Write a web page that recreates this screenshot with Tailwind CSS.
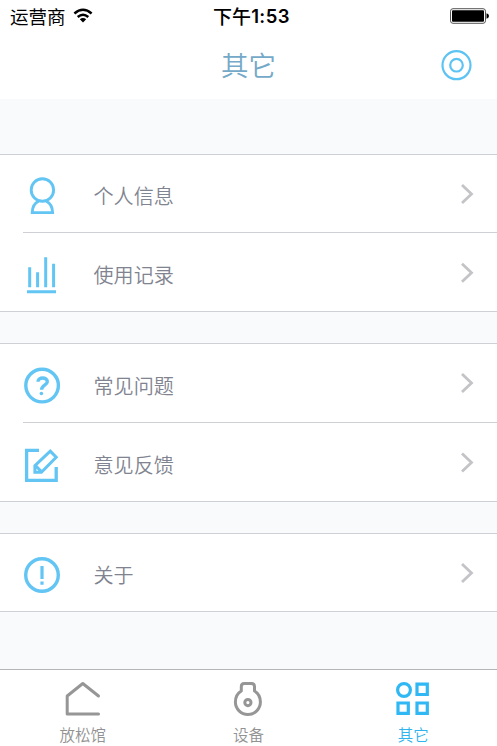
<!DOCTYPE html>
<html lang="zh-CN">
<head>
<meta charset="utf-8">
<meta name="viewport" content="width=device-width, initial-scale=1">
<title>其它</title>
<script src="https://cdn.jsdelivr.net/npm/@tailwindcss/browser@4"></script>
</head>
<body class="bg-[#f9fafc] font-['Noto_Sans_CJK_SC',sans-serif]">
<div class="flex h-[746px] w-[497px] flex-col overflow-hidden">
  <header class="h-[99px] shrink-0 bg-white">
    <div class="grid h-8 grid-cols-3 items-center text-black">
      <div class="flex items-center gap-[7px] pl-[10px]">
        <span class="text-[18.5px] leading-8">运营商</span>
        <svg class="h-[16px] w-[20px]" viewBox="0 0 20 16" fill="none" stroke="#000" stroke-width="2.5"><path d="M1.4 5.5Q10 -1.9 18.6 5.5M4.7 9Q10 4.6 15.3 9"/><path d="M6.8 11.3Q10 8.8 13.2 11.3L10 14.6Z" fill="#000" stroke="none"/></svg>
      </div>
      <div class="flex items-center justify-center whitespace-nowrap pl-[6px] leading-8">
        <span class="text-[19px] font-medium">下午</span><span class="font-['Inter',sans-serif] text-[18.5px] font-semibold tracking-[0.4px]">1:53</span>
      </div>
      <div class="flex justify-end pr-[8px]">
        <svg class="h-4 w-[39px]" viewBox="0 0 39 16"><rect x=".5" y=".7" width="35" height="14.6" rx="2.5" fill="#fff" stroke="#555"/><rect x="2" y="2.2" width="32" height="11.6" rx="1" fill="#000"/><path d="M36.5 5.3Q39 5.7 39 8T36.5 10.7Z" fill="#000"/></svg>
      </div>
    </div>
    <div class="grid h-[66px] grid-cols-3 items-center">
      <span></span>
      <h1 class="pb-[3px] text-center text-[27.5px] font-[350] leading-[60px] text-[#74a9c8]">其它</h1>
      <svg class="mr-[25px] h-8 w-8 justify-self-end" viewBox="0 0 32 32" fill="none" stroke="#5dc3f3" stroke-width="2.2"><circle cx="16.5" cy="16.2" r="14"/><circle cx="16.5" cy="16.2" r="6.3"/></svg>
    </div>
  </header>

  <main class="flex grow flex-col pt-[55px] text-[20.1px] font-[350] text-[#7f8490]">
    <section class="border-y border-[#cfd0d6] bg-white">
      <div class="flex h-[77px] items-center pr-[23px]">
        <svg class="h-[77px] w-[70px]" viewBox="0 1 70 77" fill="none" stroke="#62c5f3" stroke-width="2.9"><circle cx="42.4" cy="36" r="11.2"/><path d="M38.6 47.2Q32.4 50 32.2 58.6H52.6Q52.4 50 46.2 47.2"/></svg>
        <span class="grow pl-[23.5px] pt-1 leading-8">个人信息</span>
        <svg class="h-[22px] w-[14px]" viewBox="0 0 14 22" fill="none" stroke="#c4c4c8" stroke-width="2.8"><path d="M2 2L11.5 11L2 20"/></svg>
      </div>
      <div class="ml-[23px] h-px bg-[#cfd0d6]"></div>
      <div class="flex h-[78px] items-center pr-[23px]">
        <svg class="h-[78px] w-[70px]" viewBox="0 1 70 78" fill="none" stroke="#62c5f3" stroke-width="3"><path d="M29.7 35.3V55.3M37.6 40.3V55.3M45.7 25.3V55.3M53.6 31.8V55.3M27 59.7H56"/></svg>
        <span class="grow pl-[23.5px] pt-[6px] leading-8">使用记录</span>
        <svg class="h-[22px] w-[14px]" viewBox="0 -.7 14 22" fill="none" stroke="#c4c4c8" stroke-width="2.8"><path d="M2 2L11.5 11L2 20"/></svg>
      </div>
    </section>

    <section class="mt-[31px] border-y border-[#cfd0d6] bg-white">
      <div class="flex h-[78px] items-center pr-[23px]">
        <svg class="h-[78px] w-[70px]" viewBox="0 1 70 78" fill="none" stroke="#62c5f3" stroke-width="3.4"><circle cx="42.1" cy="42.6" r="16.3"/><path d="M38 38.8C38.1 33.7 47.3 33.6 47.3 38.8C47.3 42 41.6 41.8 41.6 46.8"/><circle cx="41.4" cy="50.5" r="1.8" fill="#62c5f3" stroke="none"/></svg>
        <span class="grow pl-[23.5px] pt-[6px] leading-8">常见问题</span>
        <svg class="h-[22px] w-[14px]" viewBox="0 0 14 22" fill="none" stroke="#c4c4c8" stroke-width="2.8"><path d="M2 2L11.5 11L2 20"/></svg>
      </div>
      <div class="ml-[23px] h-px bg-[#cfd0d6]"></div>
      <div class="flex h-[78px] items-center pr-[23px]">
        <svg class="h-[78px] w-[70px]" viewBox="0 1 70 78" fill="none" stroke="#62c5f3" stroke-width="3.3"><path d="M39 28.4H26.6V58.4H56.2V45"/><path d="M34.9 50.2V43.6L50.3 29.2L56.2 35.2L41.4 50.2ZM35.2 43.4L41.6 49.8" stroke-width="3"/></svg>
        <span class="grow pl-[23.5px] pt-[6px] leading-8">意见反馈</span>
        <svg class="h-[22px] w-[14px]" viewBox="0 -.5 14 22" fill="none" stroke="#c4c4c8" stroke-width="2.8"><path d="M2 2L11.5 11L2 20"/></svg>
      </div>
    </section>

    <section class="mt-[31px] border-y border-[#cfd0d6] bg-white">
      <div class="flex h-[77px] items-center pr-[23px]">
        <svg class="h-[77px] w-[70px]" viewBox="0 1 70 77" fill="none" stroke="#62c5f3" stroke-width="3.4"><circle cx="42" cy="42" r="16.3"/><path d="M42 33V46M42 48.6V51.8" stroke-width="3.2"/></svg>
        <span class="grow pl-[23.5px] pt-[5px] leading-8">关于</span>
        <svg class="h-[22px] w-[14px]" viewBox="0 0 14 22" fill="none" stroke="#c4c4c8" stroke-width="2.8"><path d="M2 2L11.5 11L2 20"/></svg>
      </div>
    </section>
  </main>

  <nav class="grid h-[77px] shrink-0 grid-cols-3 border-t border-[#b5b5b9] bg-white text-[15.5px] font-[350] leading-6 text-[#929292]">
    <div class="flex flex-col items-center pt-[9px]">
      <svg class="h-10 w-10" viewBox="0 0 40 40" fill="none" stroke="#969696" stroke-width="3" stroke-linecap="round" stroke-linejoin="round"><path d="M35.5 17L19.8 4.5L4.2 17V35H35.5"/></svg>
      <span class="mt-[3px]">放松馆</span>
    </div>
    <div class="flex flex-col items-center pt-[9px]">
      <svg class="h-10 w-10" viewBox="0 0 40 40" fill="none" stroke="#969696" stroke-width="3"><path d="M13.3 12V7.5Q13.3 4.5 16.3 4.5H23.5Q26.5 4.5 26.5 7.5V12Q32.4 15.5 32.4 23A12.5 12.5 0 0 1 7.4 23Q7.4 15.5 13.3 12Z" stroke-linejoin="round"/><circle cx="19.9" cy="23.6" r="3.1"/></svg>
      <span class="mt-[3px]">设备</span>
    </div>
    <div class="flex flex-col items-center pr-[2px] pt-[9px] text-[#2fb4ee]">
      <svg class="h-10 w-10" viewBox="0 0 40 40" fill="none" stroke="#2fb8f3" stroke-width="3.2"><circle cx="11" cy="11" r="6.4"/><path d="M24 5.2H34.3V15.5H24ZM5 24H15.3V34.3H5ZM24 24H34.3V34.3H24Z"/></svg>
      <span class="mt-[3px]">其它</span>
    </div>
  </nav>
</div>
</body>
</html>
